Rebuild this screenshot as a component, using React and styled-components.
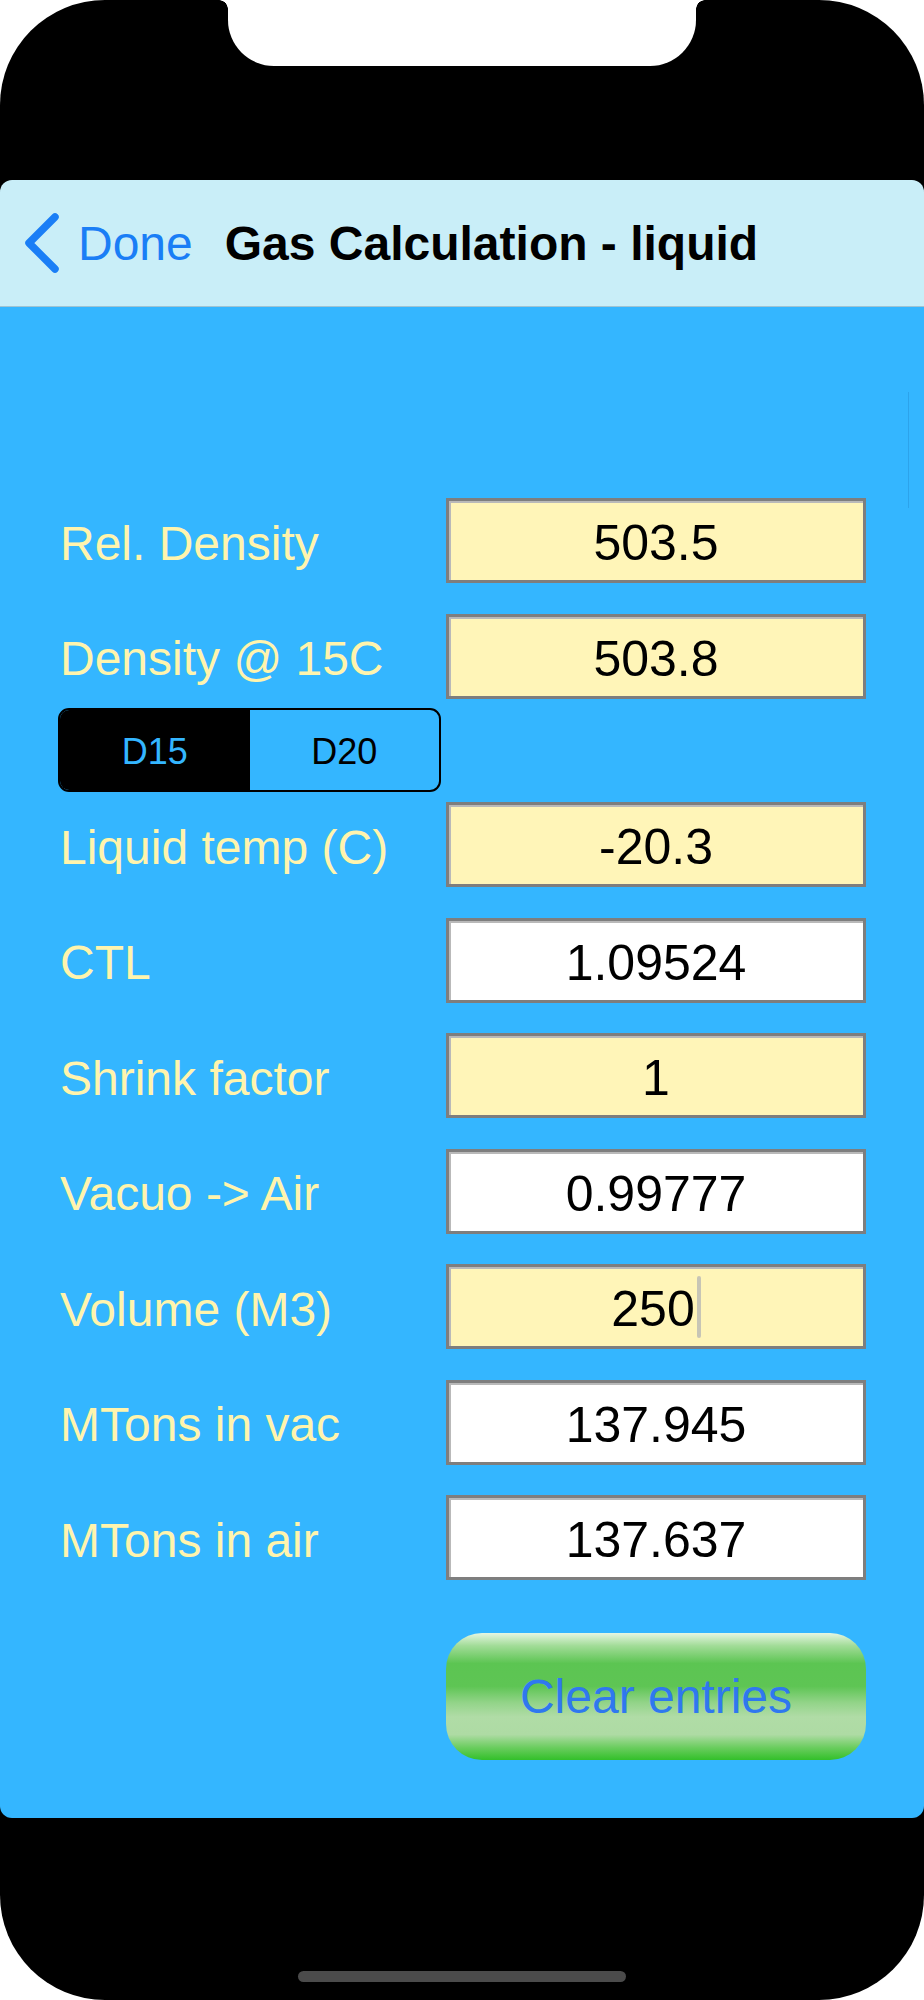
import React from "react";
import styled, { createGlobalStyle } from "styled-components";

const GlobalStyle = createGlobalStyle`
  body {
    margin: 0;
    background: #fff;
    font-family: "Liberation Sans", Arial, sans-serif;
  }
`;

const rows = [
  { label: "Rel. Density", value: "503.5", input: true },
  { label: "Density @ 15C", value: "503.8", input: true },
  { segmented: true },
  { label: "Liquid temp (C)", value: "-20.3", input: true, tight: true },
  { label: "CTL", value: "1.09524" },
  { label: "Shrink factor", value: "1", input: true },
  { label: "Vacuo -> Air", value: "0.99777" },
  { label: "Volume (M3)", value: "250", input: true, focused: true },
  { label: "MTons in vac", value: "137.945" },
  { label: "MTons in air", value: "137.637" },
];

const App = () => {
  return (
    <>
      <GlobalStyle />
      <Phone>
        <TopBezel>
          <Notch />
        </TopBezel>

        <Screen>
          <NavBar>
            <BackButton>
              <svg width="40" height="62" viewBox="0 0 40 62">
                <path
                  d="M33 5 L7 31 L33 57"
                  fill="none"
                  stroke="#1a7ef6"
                  strokeWidth="7.5"
                  strokeLinecap="round"
                  strokeLinejoin="round"
                />
              </svg>
              <span>Done</span>
            </BackButton>
            <Title>Gas Calculation - liquid</Title>
          </NavBar>

          <Content>
            {rows.map((row, i) =>
              row.segmented ? (
                <Row key={i} $gap={9.5}>
                  <Segmented>
                    <Segment $active>D15</Segment>
                    <Segment>D20</Segment>
                  </Segmented>
                </Row>
              ) : (
                <Row key={i} $gap={i === 0 ? 0 : row.tight ? 10 : 30.5}>
                  <Label>{row.label}</Label>
                  <Field $input={row.input}>
                    {row.value}
                    {row.focused && <Caret />}
                  </Field>
                </Row>
              )
            )}

            <Row $gap={53}>
              <span />
              <ClearButton>Clear entries</ClearButton>
            </Row>
          </Content>

          <ScrollIndicator />
        </Screen>

        <BottomBezel>
          <HomeBar />
        </BottomBezel>
      </Phone>
    </>
  );
};

const Phone = styled.div`
  width: 924px;
  height: 2000px;
  background: #000;
  border-radius: 105px;
  display: flex;
  flex-direction: column;
  overflow: hidden;
`;

const TopBezel = styled.div`
  flex: none;
  height: 180px;
  display: flex;
  justify-content: center;
`;

const Notch = styled.div`
  position: relative;
  width: 468px;
  height: 66px;
  background: #fff;
  border-radius: 0 0 46px 46px;

  &::before,
  &::after {
    content: "";
    position: absolute;
    top: 0;
    width: 9px;
    height: 9px;
  }
  &::before {
    left: -9px;
    background: radial-gradient(circle at 0 100%, transparent 8.5px, #fff 9px);
  }
  &::after {
    right: -9px;
    background: radial-gradient(circle at 100% 100%, transparent 8.5px, #fff 9px);
  }
`;

const Screen = styled.div`
  position: relative;
  flex: 1;
  display: flex;
  flex-direction: column;
  border-radius: 12px;
  overflow: hidden;
`;

const NavBar = styled.div`
  flex: none;
  height: 126px;
  background: #c9eef8;
  border-bottom: 1px solid #9fc4d2;
  display: flex;
  align-items: center;
  padding-left: 22px;
  gap: 32px;
`;

const BackButton = styled.div`
  display: flex;
  align-items: center;
  gap: 16px;
  color: #1a7ef6;
  font-size: 48px;
`;

const Title = styled.div`
  font-size: 48px;
  font-weight: 700;
  color: #000;
`;

const Content = styled.div`
  flex: 1;
  background: #34b6ff;
  padding: 191px 58px 0 58px;
`;

const Row = styled.div`
  display: grid;
  grid-template-columns: 1fr 420px;
  align-items: center;
  margin-top: ${(p) => p.$gap}px;
`;

const Label = styled.div`
  padding: 5px 0 0 2px;
  color: #fff4ad;
  font-size: 48px;
  white-space: nowrap;
`;

const Field = styled.div`
  box-sizing: border-box;
  height: 85px;
  padding-top: 5px;
  border: 3px solid #7e7e7e;
  box-shadow: inset 1px 1px 0 1px #b9b9b9;
  background: ${(p) => (p.$input ? "#fff5b8" : "#ffffff")};
  color: #000;
  font-size: 50px;
  display: flex;
  align-items: center;
  justify-content: center;
`;

const Caret = styled.span`
  display: inline-block;
  width: 4px;
  height: 62px;
  margin: -4px 0 0 2px;
  border-radius: 2px;
  background: rgba(180, 180, 180, 0.75);
`;

const Segmented = styled.div`
  box-sizing: border-box;
  width: 383px;
  height: 84px;
  border: 2px solid #000;
  border-radius: 11px;
  overflow: hidden;
  display: grid;
  grid-template-columns: 1fr 1fr;
`;

const Segment = styled.div`
  display: flex;
  align-items: center;
  justify-content: center;
  padding-top: 3px;
  font-size: 36px;
  background: ${(p) => (p.$active ? "#000" : "transparent")};
  color: ${(p) => (p.$active ? "#34b6ff" : "#000")};
`;

const ClearButton = styled.div`
  height: 127px;
  border-radius: 36px;
  display: flex;
  align-items: center;
  justify-content: center;
  font-size: 48px;
  color: #2f78ef;
  background: linear-gradient(
    to bottom,
    #e6f6e2 0%,
    #a2dc98 10%,
    #5cc552 24%,
    #5ec554 42%,
    #93d489 55%,
    #b0dca6 66%,
    #aedba4 80%,
    #6ccd60 90%,
    #33c02a 100%
  );
`;

const ScrollIndicator = styled.div`
  position: absolute;
  right: 15px;
  top: 212px;
  width: 1.5px;
  height: 116px;
  background: rgba(0, 60, 120, 0.15);
`;

const BottomBezel = styled.div`
  flex: none;
  height: 182px;
  display: flex;
  align-items: flex-end;
  justify-content: center;
  padding-bottom: 18px;
  box-sizing: border-box;
`;

const HomeBar = styled.div`
  width: 328px;
  height: 11px;
  border-radius: 6px;
  background: #4b4b4b;
`;

export default App;
